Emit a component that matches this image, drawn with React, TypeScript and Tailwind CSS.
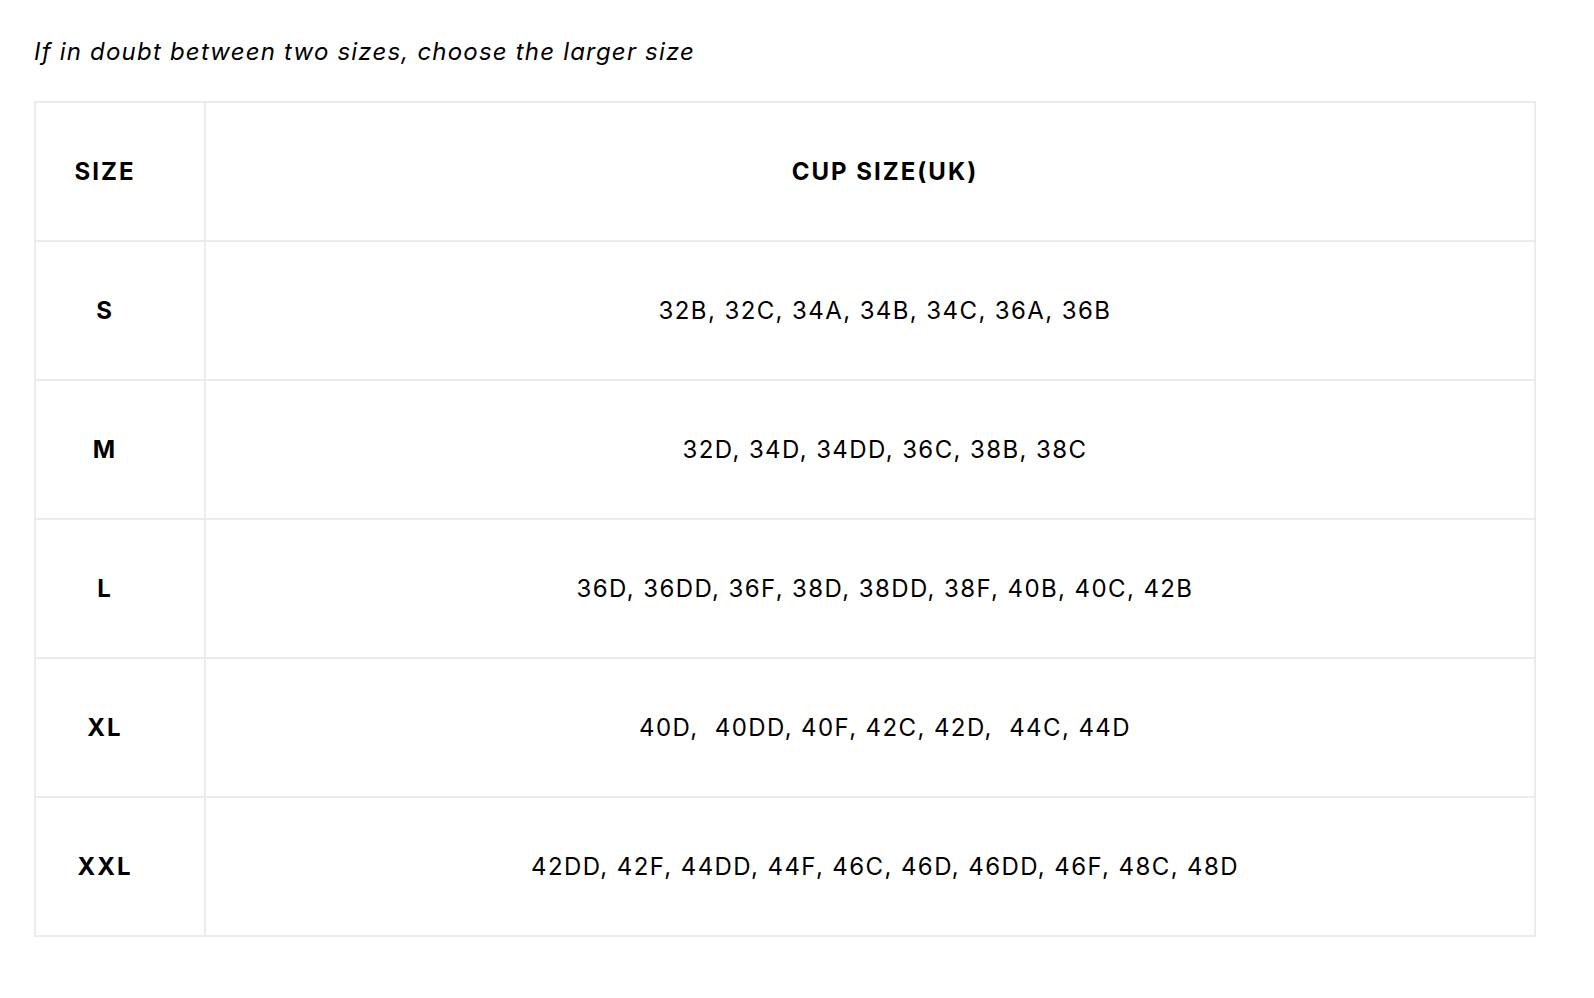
const rows: [string, string][] = [
  ['S', '32B, 32C, 34A, 34B, 34C, 36A, 36B'],
  ['M', '32D, 34D, 34DD, 36C, 38B, 38C'],
  ['L', '36D, 36DD, 36F, 38D, 38DD, 38F, 40B, 40C, 42B'],
  ['XL', '40D,  40DD, 40F, 42C, 42D,  44C, 44D'],
  ['XXL', '42DD, 42F, 44DD, 44F, 46C, 46D, 46DD, 46F, 48C, 48D'],
];

const App = () => {
  return (
    <div className="min-h-[998px] bg-white pl-[34px] pt-[36px] font-['Inter',sans-serif] text-black">
      <p className="text-[24px] leading-[32px] tracking-[1.2px] italic">If in doubt between two sizes, choose the larger size</p>

      <table className="mt-[33px] w-[1502px] border-collapse text-[24px]">
        <thead>
          <tr className="h-[139px]">
            <th className="w-[170px] border-2 border-[#ebebeb] pr-[30px] text-center font-bold tracking-[2px]">SIZE</th>
            <th className="border-2 border-[#ebebeb] pl-[30px] text-center font-bold tracking-[2px]">CUP SIZE(UK)</th>
          </tr>
        </thead>
        <tbody>
          {rows.map(([size, cups]) => (
            <tr key={size} className="h-[139px]">
              <td className="border-2 border-[#ebebeb] pr-[30px] text-center font-bold tracking-[2px]">{size}</td>
              <td className="whitespace-pre border-2 border-[#ebebeb] pl-[30px] text-center tracking-[1.4px]">{cups}</td>
            </tr>
          ))}
        </tbody>
      </table>
    </div>
  );
};

export default App;
